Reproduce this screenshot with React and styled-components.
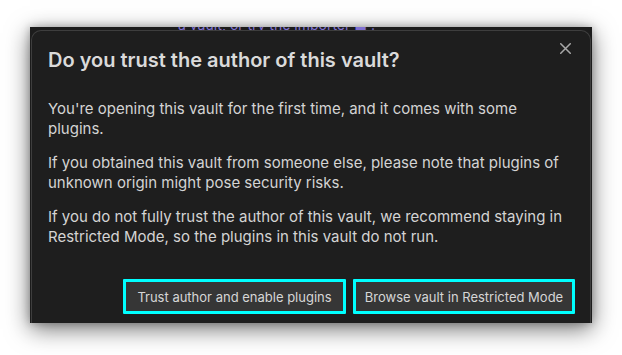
import React from "react";
import styled, { createGlobalStyle } from "styled-components";

const Global = createGlobalStyle`
  html, body { margin: 0; padding: 0; background: #ffffff; }
  body { font-family: Inter, "Noto Sans", sans-serif; -webkit-font-smoothing: antialiased; }
`;

const Page = styled.div`
  width: 622px;
  height: 355px;
  padding: 27px 30px 0 30px;
  box-sizing: border-box;
  background: #ffffff;
`;

const Window = styled.div`
  width: 562px;
  height: 296px;
  background: #1c1c1c;
  box-shadow: 0 6px 22px rgba(0, 0, 0, 0.55), 0 0 8px rgba(0, 0, 0, 0.25);
  overflow: hidden;
  display: flex;
  flex-direction: column;
`;

const BehindStrip = styled.div`
  height: 3px;
  overflow: hidden;
  display: flex;
  align-items: flex-end;
  padding-left: 148px;
`;

const BehindText = styled.span`
  font-size: 14px;
  line-height: 14px;
  color: #7f6fd0;
  white-space: nowrap;
  margin-bottom: -2px;
`;

const Modal = styled.div`
  position: relative;
  flex: 1;
  margin: 0 1px;
  background: #1e1e1e;
  border: 1px solid #3e3e3e;
  border-bottom: none;
  border-radius: 10px 10px 0 0;
  padding: 17px 15px 0 16px;
  display: flex;
  flex-direction: column;
  color: #dadada;
`;

const Close = styled.button`
  position: absolute;
  top: 9px;
  right: 17px;
  width: 16px;
  height: 16px;
  padding: 0;
  border: none;
  background: transparent;
  color: #a8a8a8;
  display: flex;
  align-items: center;
  justify-content: center;
`;

const Title = styled.h2`
  margin: 0;
  font-size: 20px;
  line-height: 24px;
  font-weight: 600;
  color: #dadada;
`;

const Body = styled.div`
  margin-top: 27px;
  display: flex;
  flex-direction: column;
  gap: 15px;
`;

const Para = styled.p`
  margin: 0;
  font-size: 15px;
  line-height: 19.5px;
  color: #d4d4d4;
`;

const Buttons = styled.div`
  margin-top: 33px;
  display: flex;
  justify-content: flex-end;
  gap: 7px;
`;

const Button = styled.button`
  width: ${(p) => p.$w}px;
  height: 35px;
  box-sizing: border-box;
  padding: 1px 0 0 0;
  border: 3px solid #00ffff;
  border-radius: 1px;
  background: #363636;
  color: #d6d6d6;
  font-family: Inter, "Noto Sans", sans-serif;
  font-size: 13px;
  white-space: nowrap;
  text-align: center;
`;

export default function App() {
  return (
    <>
      <Global />
      <Page>
        <Window>
          <BehindStrip>
            <BehindText>a vault, or try the importer ■ .</BehindText>
          </BehindStrip>
          <Modal>
            <Close aria-label="Close">
              <svg width="11" height="11" viewBox="0 0 11 11">
                <path d="M0.75 0.75 L10.25 10.25 M10.25 0.75 L0.75 10.25" stroke="currentColor" strokeWidth="1.5" strokeLinecap="round" />
              </svg>
            </Close>
            <Title>Do you trust the author of this vault?</Title>
            <Body>
              <Para>You're opening this vault for the first time, and it comes with some plugins.</Para>
              <Para>If you obtained this vault from someone else, please note that plugins of unknown origin might pose security risks.</Para>
              <Para>If you do not fully trust the author of this vault, we recommend staying in Restricted Mode, so the plugins in this vault do not run.</Para>
            </Body>
            <Buttons>
              <Button $w={223}>Trust author and enable plugins</Button>
              <Button $w={222}>Browse vault in Restricted Mode</Button>
            </Buttons>
          </Modal>
        </Window>
      </Page>
    </>
  );
}
